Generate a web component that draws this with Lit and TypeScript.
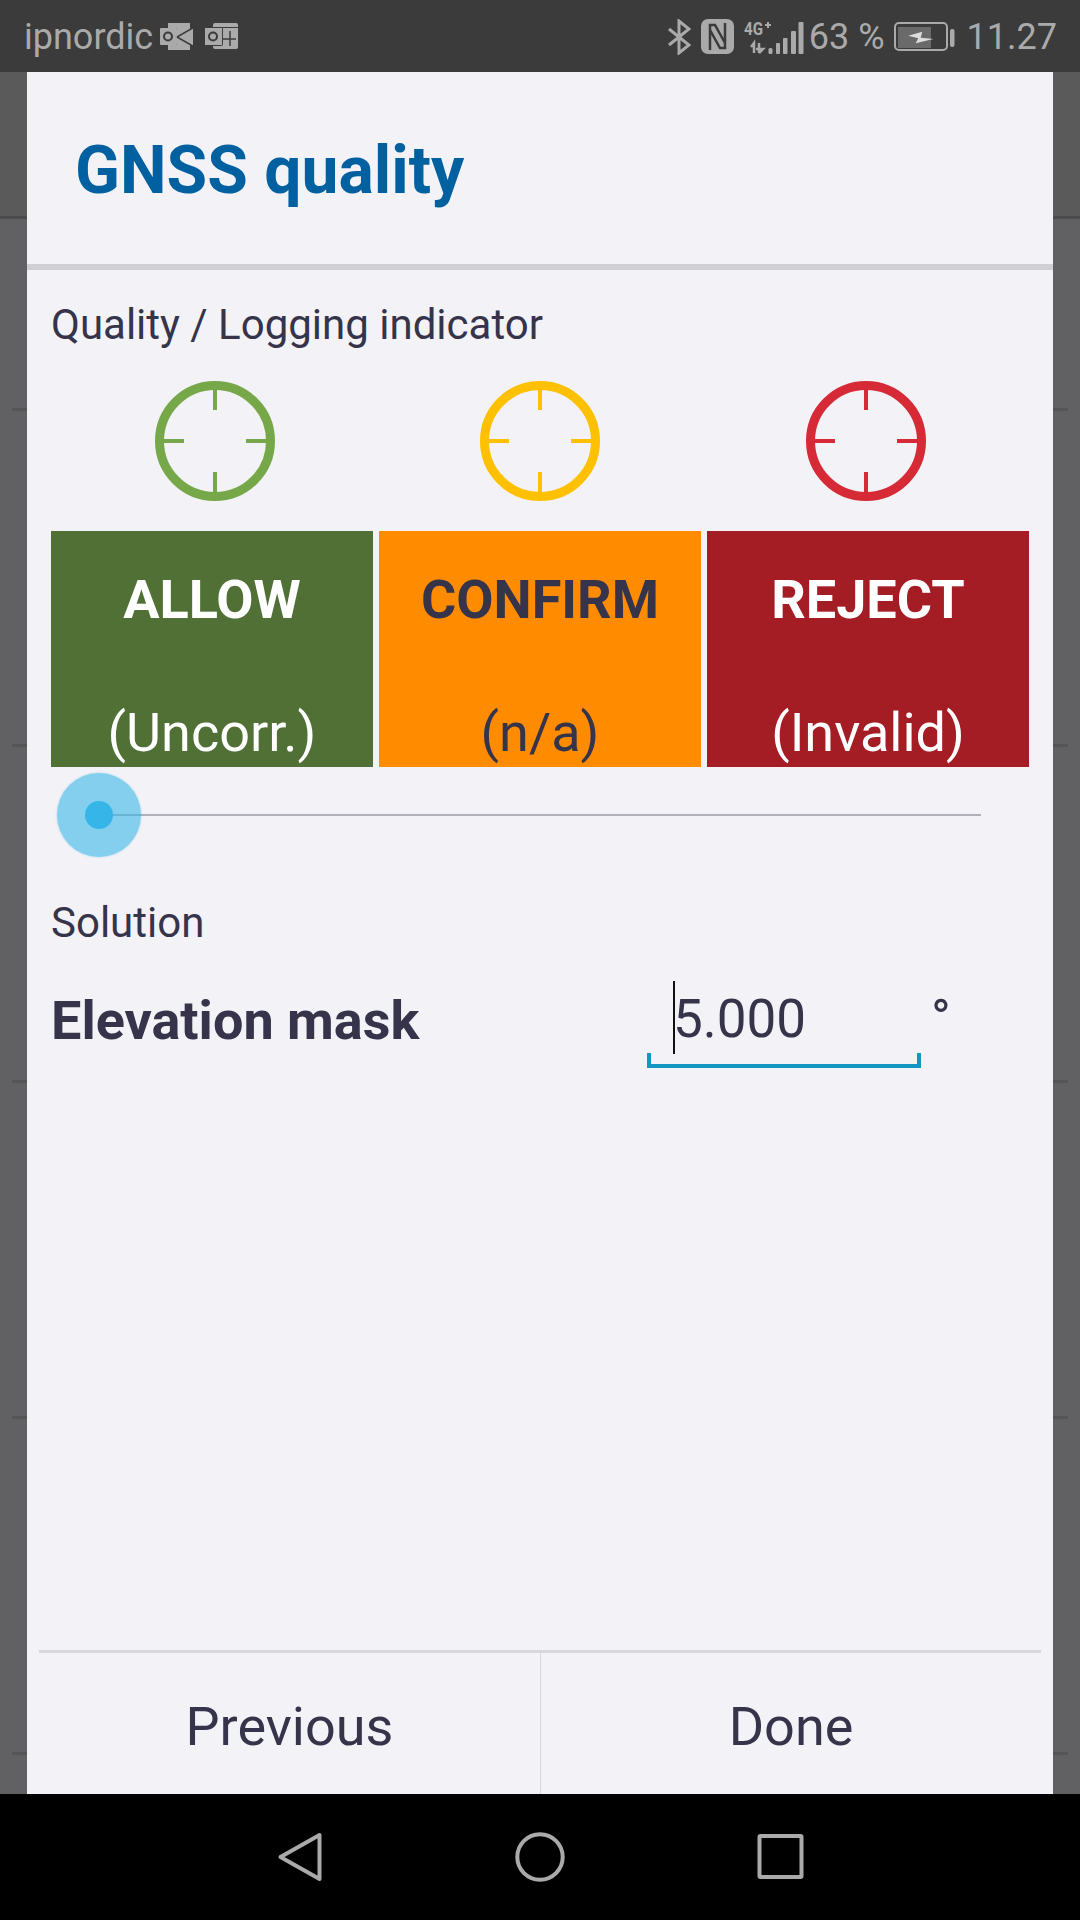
import { LitElement, html, css } from 'lit'
import { customElement } from 'lit/decorators.js'

const indicators = ['#76a84a', '#ffc000', '#d62b36']

const choices = [
    { title: 'ALLOW', sub: '(Uncorr.)', cls: 'allow' },
    { title: 'CONFIRM', sub: '(n/a)', cls: 'confirm' },
    { title: 'REJECT', sub: '(Invalid)', cls: 'reject' },
]

const crosshair = (color: string) => html`
    <svg class="target" viewBox="0 0 120 120" fill="none" stroke="${color}">
        <circle cx="60" cy="60" r="55.500" stroke-width="9"/>
        <path d="M60 4v25M60 91v25M4 60h25M91 60h25" stroke-width="4"/>
    </svg>`

@customElement('app-root')
export class AppRoot extends LitElement {
    static styles = css`
      :host {
        display: block;
        width: 1080px;
        height: 1920px;
        position: relative;
        overflow: hidden;
        font-family: Roboto, "Liberation Sans", sans-serif;
        color: #35344a;
        background: #000;
      }
      .status {
        height: 72px;
        background: #3b3b3b;
        color: #aaa;
        display: flex;
        align-items: center;
        justify-content: space-between;
        padding: 1px 23px 0 24px;
        box-sizing: border-box;
        font-size: 36px;
      }
      .status svg { display: block; flex: none; }
      .status-left, .status-right { display: flex; align-items: center; }
      .status-left svg { margin: -1px 0 0 7px; }
      .status-left svg + svg { margin-left: 12px; }
      .gap { margin-left: 10px; }
      .pct { margin: 0 9px 0 5px; }
      .time { margin-left: 11px; }
      .signal-text { font: 700 18px Roboto, sans-serif; fill: #aaa; }
      .backdrop {
        height: 1722px;
        background: #616163;
      }
      .backdrop-head {
        height: 147px;
        background: #5a5a5b;
        border-bottom: 3px solid #4c4c4d;
        box-sizing: border-box;
      }
      .backdrop-row {
        height: 336px;
        box-sizing: border-box;
        margin: 0 12px;
        border-bottom: 3px solid #555556;
      }
      .backdrop-row.first { height: 192px; }
      .dialog {
        position: absolute;
        left: 27px;
        top: 72px;
        width: 1026px;
        height: 1722px;
        background: #f2f2f7;
        display: flex;
        flex-direction: column;
      }
      .title {
        height: 198px;
        box-sizing: border-box;
        padding: 66px 0 0 48px;
        border-bottom: 6px solid #cfcfd4;
        font-size: 66px;
        line-height: 66px;
        font-weight: 700;
        color: #0060a0;
      }
      .body {
        padding: 0 24px;
        flex: 1;
      }
      .label {
        font-size: 42px;
        line-height: 48px;
      }
      .quality { padding-top: 31px; }
      .targets {
        display: grid;
        grid-template-columns: repeat(3, 1fr);
        gap: 6px;
        justify-items: center;
        padding: 32px 3px 30px 4px;
      }
      .target { width: 120px; height: 120px; display: block; }
      .choices {
        display: grid;
        grid-template-columns: repeat(3, 322px);
        gap: 6px;
      }
      .choice {
        height: 236px;
        box-sizing: border-box;
        padding-top: 2px;
        overflow: hidden;
        color: #fff;
        text-align: center;
        font-size: 54px;
        line-height: 134px;
      }
      .choice b { display: block; font-weight: 700; }
      .choice span { display: block; margin-top: -1px; }
      .allow { background: #507035; }
      .confirm { background: #ff8c00; color: #35344a; }
      .reject { background: #a51d24; }
      .slider {
        height: 96px;
        position: relative;
        display: flex;
        align-items: center;
      }
      .track {
        margin-left: 48px;
        width: 882px;
        height: 2px;
        background: #b0b0b8;
      }
      .thumb {
        position: absolute;
        left: 6px;
        top: 6px;
        width: 84px;
        height: 84px;
        border-radius: 50%;
        background: rgba(58, 183, 231, 0.6);
        box-shadow: 0 0 2px rgba(58, 183, 231, 0.5);
        display: flex;
        align-items: center;
        justify-content: center;
      }
      .thumb i {
        width: 28px;
        height: 28px;
        border-radius: 50%;
        background: #35b5e8;
      }
      .solution { padding-top: 36px; }
      .field {
        display: flex;
        align-items: flex-start;
        margin-top: 34px;
      }
      .field-name {
        width: 596px;
        font-size: 54px;
        line-height: 74px;
        font-weight: 700;
        padding-top: 3px;
      }
      .input {
        width: 274px;
        height: 87px;
        box-sizing: border-box;
        padding-left: 22px;
        position: relative;
        font-size: 53px;
        line-height: 76px;
        border: 4px solid #1297c1;
        border-top: 0;
        border-image: linear-gradient(to bottom, transparent 0 73px, #1297c1 73px) 4;
      }
      .caret {
        position: absolute;
        left: 22px;
        top: 0;
        width: 2px;
        height: 73px;
        background: #111;
      }
      .unit {
        margin-left: 10px;
        font-size: 53px;
        line-height: 76px;
      }
      .footer {
        margin: 0 12px;
        height: 144px;
        box-sizing: border-box;
        border-top: 3px solid #d8d8dc;
        display: grid;
        grid-template-columns: 1fr 1fr;
      }
      .footer div {
        display: flex;
        align-items: center;
        justify-content: center;
        padding-top: 6px;
        box-sizing: border-box;
        font-size: 54px;
      }
      .footer div + div { border-left: 1px solid #d8d8dc; }
      .nav {
        position: absolute;
        left: 0;
        top: 1794px;
        width: 1080px;
        height: 126px;
        background: #000;
      }
      .nav svg { display: block; }
    `

    protected override render() {
        return html`
        <div class="status">
            <div class="status-left">
                <span>ipnordic</span>
                <svg width="33" height="27" viewBox="0 0 33 27">
                    <path d="M8 0h22v6l-11 7 14-8v18l-14-8 11 7v5H8v-5h9V5H8z" fill="#aaa"/>
                    <rect x="0" y="5" width="17" height="17" rx="1" fill="#aaa"/>
                    <circle cx="8" cy="13.500" r="4" fill="none" stroke="#3b3b3b" stroke-width="2"/>
                    <path d="M17 14L33 5M17 14l16 9" fill="none" stroke="#3b3b3b" stroke-width="1.500"/>
                </svg>
                <svg width="33" height="27" viewBox="0 0 33 27">
                    <rect x="8" y="0" width="25" height="26" rx="2" fill="#aaa"/>
                    <path d="M13 4.500h20" stroke="#3b3b3b" stroke-width="1"/>
                    <rect x="-0.500" y="4.500" width="18" height="18" rx="1" fill="#aaa" stroke="#3b3b3b" stroke-width="1"/>
                    <circle cx="8" cy="13.500" r="4" fill="none" stroke="#3b3b3b" stroke-width="2"/>
                    <path d="M25 8v15M18 16h13" stroke="#3b3b3b" stroke-width="1.500"/>
                </svg>
            </div>
            <div class="status-right">
                <svg width="24" height="36" viewBox="0 0 24 36" fill="none" stroke="#aaa" stroke-width="3">
                    <path d="M2 10l20 16-10 8V2l10 8L2 26"/>
                </svg>
                <svg class="gap" width="33" height="35" viewBox="0 0 33 35" fill="none">
                    <rect width="33" height="35" rx="7" fill="#aaa"/>
                    <path d="M9 31V6h5l10 18M24 4v25h-5L9 11" stroke="#3b3b3b" stroke-width="2.500"/>
                </svg>
                <svg class="gap" width="60" height="36" viewBox="0 0 60 36" fill="#aaa">
                    <text class="signal-text" x="0" y="16" textLength="19" lengthAdjust="spacingAndGlyphs">4G</text>
                    <path d="M21 6h6M24 3v6" stroke="#aaa" stroke-width="2" fill="none"/>
                    <path d="M10 34V24M7 28l3-4v10M15 24v10M15 34l4-4h-7" stroke="#aaa" stroke-width="2.500" fill="none"/>
                    <rect x="24.500" y="29" width="4" height="6" rx="1.500"/>
                    <rect x="32" y="24" width="4" height="11" rx="1"/>
                    <rect x="39" y="19" width="4.500" height="16" rx="1"/>
                    <rect x="47" y="12" width="5" height="23" rx="1"/>
                    <rect x="54.500" y="3" width="5" height="32" rx="1"/>
                </svg>
                <span class="pct">63 %</span>
                <svg width="62" height="30" viewBox="0 0 62 30">
                    <rect x="1" y="1" width="52" height="27" rx="4" fill="none" stroke="#aaa" stroke-width="2"/>
                    <rect x="4" y="5" width="33" height="21" fill="#6a6a6a"/>
                    <rect x="56" y="7" width="4.500" height="18" rx="2" fill="#aaa"/>
                    <path d="M14.300 13.700l14-4-1.600 6 12.600 1.300-17.600 4.300 2.600-5z" fill="#ddd"/>
                </svg>
                <span class="time">11.27</span>
            </div>
        </div>
        <div class="backdrop">
            <div class="backdrop-head"></div>
            <div class="backdrop-row first"></div>
            ${[0, 1, 2, 3].map(() => html`<div class="backdrop-row"></div>`)}
        </div>
        <div class="dialog">
            <div class="title">GNSS quality</div>
            <div class="body">
                <div class="label quality">Quality / Logging indicator</div>
                <div class="targets">${indicators.map(c => crosshair(c))}</div>
                <div class="choices">
                    ${choices.map(c => html`
                    <div class="choice ${c.cls}"><b>${c.title}</b><span>${c.sub}</span></div>`)}
                </div>
                <div class="slider">
                    <div class="track"></div>
                    <div class="thumb"><i></i></div>
                </div>
                <div class="label solution">Solution</div>
                <div class="field">
                    <div class="field-name">Elevation mask</div>
                    <div class="input"><span class="caret"></span>5.000</div>
                    <div class="unit">°</div>
                </div>
            </div>
            <div class="footer">
                <div>Previous</div>
                <div>Done</div>
            </div>
        </div>
        <div class="nav">
            <svg width="1080" height="126" viewBox="0 0 1080 126" fill="none" stroke="#aaa" stroke-width="4" stroke-linejoin="round">
                <path d="M319.500 41v44l-39-22z"/>
                <circle cx="540" cy="63" r="22.700"/>
                <rect x="759.500" y="42" width="42" height="41" rx="1"/>
            </svg>
        </div>
        `
    }
}

declare global {
    interface HTMLElementTagNameMap {
      'app-root': AppRoot
    }
}
